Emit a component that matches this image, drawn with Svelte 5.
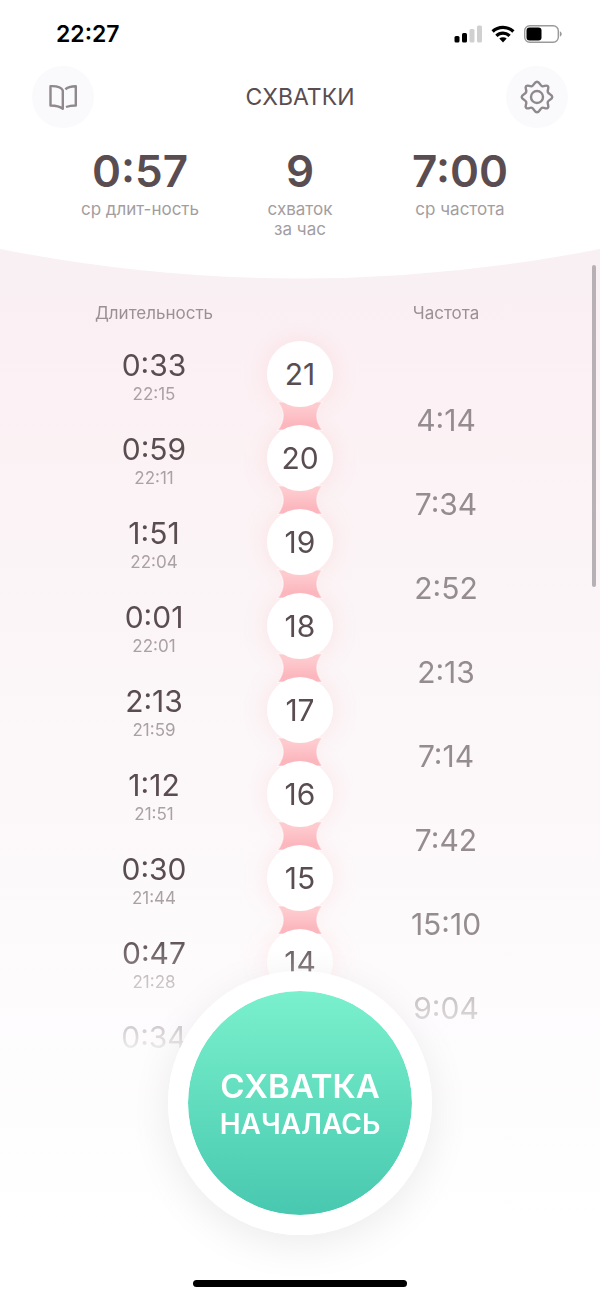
<script>
  const stats = [
    { value: '0:57', lines: ['ср длит-ность'] },
    { value: '9', lines: ['схваток', 'за час'] },
    { value: '7:00', lines: ['ср частота'] }
  ];

  const contractions = [
    { number: 21, duration: '0:33', time: '22:15', interval: '4:14' },
    { number: 20, duration: '0:59', time: '22:11', interval: '7:34' },
    { number: 19, duration: '1:51', time: '22:04', interval: '2:52' },
    { number: 18, duration: '0:01', time: '22:01', interval: '2:13' },
    { number: 17, duration: '2:13', time: '21:59', interval: '7:14' },
    { number: 16, duration: '1:12', time: '21:51', interval: '7:42' },
    { number: 15, duration: '0:30', time: '21:44', interval: '15:10' },
    { number: 14, duration: '0:47', time: '21:28', interval: '9:04' },
    { duration: '0:34' }
  ];
</script>

<div class="screen">
  <header>
    <div class="status">
      <span class="clock">22:27</span>
      <div class="indicators">
        <svg width="28" height="18" viewBox="0 0 28 18" aria-hidden="true">
          <rect x="0.500" y="11" width="5" height="6.500" rx="1.500" />
          <rect x="8" y="8" width="5" height="9.500" rx="1.500" />
          <rect x="15.500" y="4" width="5" height="13.500" rx="1.500" fill="#d0d0d0" />
          <rect x="23" y="0.500" width="5" height="17" rx="1.500" fill="#d0d0d0" />
        </svg>
        <svg width="24" height="18" viewBox="0 0 24 18" aria-hidden="true">
          <g fill="none" stroke="#000" stroke-width="3.200">
            <path d="M1.600 6.500 A15 15 0 0 1 22.400 6.500" />
            <path d="M5.400 10.900 A9.300 9.300 0 0 1 18.600 10.900" />
          </g>
          <path d="M8.300 13.600 A5.400 5.400 0 0 1 15.700 13.600 L12 17.400 Z" />
        </svg>
        <svg width="38" height="18" viewBox="0 0 38 18" aria-hidden="true">
          <rect x="0.700" y="0.700" width="33.600" height="16.600" rx="5" fill="none" stroke="#9a9a9a" stroke-width="1.400" />
          <rect x="2.500" y="2.500" width="15" height="13" rx="3" />
          <path d="M35.800 6.300 C38.400 7.300 38.400 10.700 35.800 11.700 Z" fill="#9a9a9a" />
        </svg>
      </div>
    </div>

    <div class="toolbar">
      <button class="round" aria-label="Справка">
        <svg width="30" height="30" viewBox="0 0 30 30" fill="none" stroke="#8f898b" stroke-width="2.400" stroke-linejoin="round" aria-hidden="true">
          <path d="M14.800 26.800 C11.500 24 7 23.500 2.500 23.500 V4.200 C7.500 4 13 4.600 14.800 8.500 Z" />
          <path d="M17.400 7.400 C19.800 4.800 23.500 4.200 27.800 4.200 V23.500 C24.500 23.500 21.500 23.700 18 25" />
        </svg>
      </button>
      <h1>СХВАТКИ</h1>
      <button class="round" aria-label="Настройки">
        <svg width="34" height="34" viewBox="0 0 34 34" fill="none" stroke="#8f898b" stroke-width="2.400" stroke-linejoin="round" aria-hidden="true">
          <circle cx="17" cy="17" r="6" />
          <path d="M17 1.700 C19.600 1.700 19.800 5.400 22 6.200 C24.200 7 26 4.400 27.800 6.200 C29.600 8 27 9.800 27.800 12 C28.600 14.200 32.300 14.400 32.300 17 C32.300 19.600 28.600 19.800 27.800 22 C27 24.200 29.600 26 27.800 27.800 C26 29.600 24.200 27 22 27.800 C19.800 28.600 19.600 32.300 17 32.300 C14.400 32.300 14.200 28.600 12 27.800 C9.800 27 8 29.600 6.200 27.800 C4.400 26 7 24.200 6.200 22 C5.400 19.800 1.700 19.600 1.700 17 C1.700 14.400 5.400 14.200 6.200 12 C7 9.800 4.400 8 6.200 6.200 C8 4.400 9.800 7 12 6.200 C14.200 5.400 14.400 1.700 17 1.700 Z" />
        </svg>
      </button>
    </div>

    <dl class="stats">
      {#each stats as stat}
        <div>
          <dd>{stat.value}</dd>
          <dt>
            {#each stat.lines as line}<span>{line}</span>{/each}
          </dt>
        </div>
      {/each}
    </dl>
  </header>
  <svg class="curve" viewBox="0 0 600 30" preserveAspectRatio="none" aria-hidden="true">
    <path d="M0 0 Q300 59 600 0 Z" fill="#fff" />
  </svg>

  <main>
    <div class="list">
      <table>
        <thead>
          <tr><th scope="col">Длительность</th><td></td><th scope="col">Частота</th></tr>
        </thead>
        <tbody>
          {#each contractions as item}
            <tr>
              <td>
                <span class="duration">{item.duration}</span>
                {#if item.time}<span class="time">{item.time}</span>{/if}
              </td>
              <td>
                {#if item.number}
                  <div class="halo"><span class="node">{item.number}</span></div>
                  <svg class="link" width="46" height="42" viewBox="0 0 46 42" aria-hidden="true">
                    <defs>
                      <linearGradient id="link-{item.number}" x1="0" y1="0" x2="0" y2="1">
                        <stop offset="0.200" stop-color="#fdcace" />
                        <stop offset="0.800" stop-color="#fcb6bd" />
                      </linearGradient>
                    </defs>
                    <path d="M1 7 C8 17 8 25 1 35 H45 C38 25 38 17 45 7 Z" fill="url(#link-{item.number})" stroke="#fff" stroke-opacity="0.400" stroke-width="1.500" />
                  </svg>
                {/if}
              </td>
              <td class="interval-cell">
                {#if item.interval}<span class="interval">{item.interval}</span>{/if}
              </td>
            </tr>
          {/each}
        </tbody>
      </table>
    </div>
    <div class="thumb"></div>
    <div class="dock">
      <button class="start"><span class="big">СХВАТКА</span><span class="small">НАЧАЛАСЬ</span></button>
      <div class="home"></div>
    </div>
  </main>
</div>

<style>
  :global(body) {
    margin: 0;
  }

  .screen {
    display: flex;
    flex-direction: column;
    height: 100vh;
    overflow: hidden;
    background: linear-gradient(#f9f0f4 20%, #fcf1f4 30%, #fbf4f6 42%, #fcf8fa 62%, #fefdfe 85%, #fff 95%);
    font-family: Inter, "Noto Sans", sans-serif;
    color: #5a4d51;
  }

  header {
    background: #fff;
  }

  .status {
    display: flex;
    justify-content: space-between;
    align-items: center;
    height: 66px;
    padding: 2px 38px 0 56px;
    box-sizing: border-box;
  }

  .clock {
    font-size: 23px;
    font-weight: 600;
    color: #000;
  }

  .indicators {
    display: flex;
    gap: 9px;
  }

  .toolbar {
    display: flex;
    justify-content: space-between;
    align-items: center;
    padding: 0 32px;
  }

  .round {
    display: grid;
    place-items: center;
    width: 62px;
    height: 62px;
    padding: 0;
    border: 0;
    border-radius: 50%;
    background: #faf9fc;
  }

  h1 {
    margin: 0;
    font-size: 23px;
    font-weight: 400;
  }

  .stats {
    display: grid;
    grid-template-columns: repeat(3, 160px);
    justify-content: center;
    margin: 0;
    padding: 18px 0 10px;
    text-align: center;
  }

  .stats div {
    display: flex;
    flex-direction: column;
    gap: 3px;
  }

  .stats dd {
    margin: 0;
    font-size: 44px;
    line-height: 50px;
    font-weight: 600;
  }

  .stats dt {
    display: flex;
    flex-direction: column;
    font-size: 17px;
    line-height: 20px;
    color: #a39d9f;
  }

  .curve {
    flex: none;
    width: 100%;
    height: 30px;
  }

  main {
    position: relative;
    display: grid;
    grid-template-rows: minmax(0, 1fr);
    flex: 1;
    min-height: 0;
  }

  .list {
    grid-area: 1 / 1;
    margin-bottom: 237px;
    overflow: hidden;
    mask-image: linear-gradient(to top, transparent, #000 125px);
  }

  table {
    width: 438px;
    margin: 0 auto;
    table-layout: fixed;
    border-collapse: collapse;
    text-align: center;
  }

  th {
    height: 62px;
    padding: 6px 0 0;
    box-sizing: border-box;
    font-size: 17px;
    font-weight: 400;
    color: #9b9094;
  }

  td {
    padding: 0;
    vertical-align: top;
  }

  tbody tr {
    height: 84px;
  }

  .duration,
  .interval {
    display: block;
    font-size: 30px;
    line-height: 36px;
    font-weight: 400;
  }

  .duration {
    padding-top: 6px;
  }

  .time {
    display: block;
    font-size: 17px;
    line-height: 22px;
    color: #aaa1a5;
  }

  .interval-cell {
    vertical-align: bottom;
  }

  .interval {
    margin-bottom: -13px;
    color: #958c90;
  }

  .halo {
    width: 66px;
    margin: 0 auto;
    border-radius: 50%;
    box-shadow: 0 0 26px rgba(255, 150, 145, 0.19);
  }

  .node {
    position: relative;
    z-index: 2;
    display: grid;
    place-items: center;
    height: 66px;
    border-radius: 50%;
    background: #fff;
    font-size: 30px;
    font-weight: 400;
  }

  .link {
    position: relative;
    z-index: 1;
    display: block;
    margin: -12px auto;
  }

  .thumb {
    position: absolute;
    top: -14px;
    right: 4px;
    width: 4px;
    height: 322px;
    border-radius: 2px;
    background: #b7b0b4;
  }

  .dock {
    position: relative;
    z-index: 3;
    grid-area: 1 / 1;
    align-self: end;
    display: flex;
    flex-direction: column;
    align-items: center;
    gap: 45px;
    padding-bottom: 10px;
  }

  .start {
    display: flex;
    flex-direction: column;
    align-items: center;
    justify-content: center;
    width: 264px;
    height: 264px;
    padding: 0;
    border: 20px solid #fff;
    border-radius: 50%;
    background: linear-gradient(#7af0cd, #63dfbf 45%, #48c8b0) padding-box;
    box-shadow: 0 10px 40px rgba(0, 0, 0, 0.08);
    font-family: inherit;
    font-weight: 600;
    color: #fff;
  }

  .big {
    font-size: 33px;
    line-height: 42px;
  }

  .small {
    font-size: 28px;
    line-height: 34px;
  }

  .home {
    width: 214px;
    height: 7px;
    border-radius: 4px;
    background: #000;
  }
</style>
